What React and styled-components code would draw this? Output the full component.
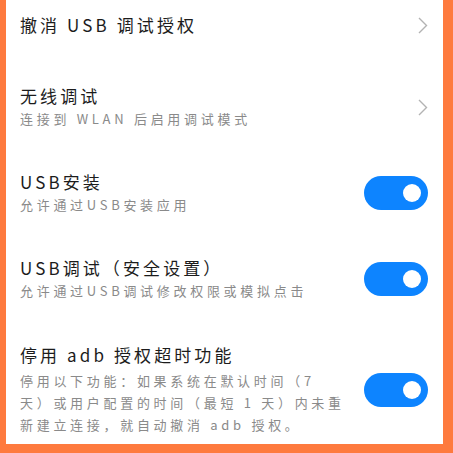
import React from "react";
import styled, { createGlobalStyle } from "styled-components";

const Global = createGlobalStyle`
  html, body {
    margin: 0;
    padding: 0;
    height: 100%;
    overflow: hidden;
  }
  body {
    font-family: "Noto Sans CJK SC", "Noto Sans", sans-serif;
  }
`;

const Frame = styled.div`
  height: 453px;
  box-sizing: border-box;
  background-color: #fe7a3e;
  padding: 0 10px 9px 6px;
  display: flex;
`;

const Panel = styled.div`
  flex: 1;
  background-color: #ffffff;
  padding: 0 15px 0 14px;
  display: flex;
  flex-direction: column;
  overflow: hidden;
`;

const Row = styled.div`
  display: flex;
  align-items: center;
  gap: 14px;
  min-height: ${(p) => (p.$first ? "64px" : "86px")};
  box-sizing: border-box;
  flex-shrink: 0;
  padding: ${(p) => (p.$first ? "13px 0 27px" : p.$long ? "21px 0 14px" : "20px 0")};
`;

const Texts = styled.div`
  flex: 1;
  max-width: 326px;
  display: flex;
  flex-direction: column;
`;

const Title = styled.div`
  font-size: 17px;
  line-height: 24px;
  letter-spacing: 3.1px;
  color: #1c1c1c;
`;

const Sub = styled.div`
  font-size: 13px;
  line-height: 22px;
  letter-spacing: 3.7px;
  color: #8a8a8a;
  margin-top: ${(p) => (p.$long ? "3px" : "0")};
`;

const Chevron = styled.svg`
  width: 10px;
  height: 17px;
  margin-left: auto;
  flex-shrink: 0;
`;

const Switch = styled.div`
  width: 64px;
  height: 34px;
  border-radius: 17px;
  background-color: #0d84ff;
  margin-left: auto;
  flex-shrink: 0;
  display: flex;
  align-items: center;
  justify-content: flex-end;
  padding-right: 7px;
  box-sizing: border-box;
  &::after {
    content: "";
    width: 18px;
    height: 18px;
    border-radius: 50%;
    background-color: #ffffff;
  }
`;

function Arrow() {
  return (
    <Chevron viewBox="0 0 10 17">
      <path d="M1 1 L8.5 8.5 L1 16" fill="none" stroke="#b3b3b3" strokeWidth="1.4" />
    </Chevron>
  );
}

const items = [
  { title: "撤消 USB 调试授权", type: "link" },
  { title: "无线调试", sub: "连接到 WLAN 后启用调试模式", type: "link" },
  { title: "USB安装", sub: "允许通过USB安装应用", type: "switch" },
  { title: "USB调试（安全设置）", sub: "允许通过USB调试修改权限或模拟点击", type: "switch" },
  {
    title: "停用 adb 授权超时功能",
    sub: "停用以下功能：如果系统在默认时间（7 天）或用户配置的时间（最短 1 天）内未重新建立连接，就自动撤消 adb 授权。",
    type: "switch",
    long: true,
  },
];

export default function App() {
  return (
    <>
      <Global />
      <Frame>
        <Panel>
          {items.map((it, i) => (
            <Row key={i} $first={i === 0} $long={it.long}>
              <Texts>
                <Title>{it.title}</Title>
                {it.sub && <Sub $long={it.long}>{it.sub}</Sub>}
              </Texts>
              {it.type === "link" ? <Arrow /> : <Switch />}
            </Row>
          ))}
        </Panel>
      </Frame>
    </>
  );
}
